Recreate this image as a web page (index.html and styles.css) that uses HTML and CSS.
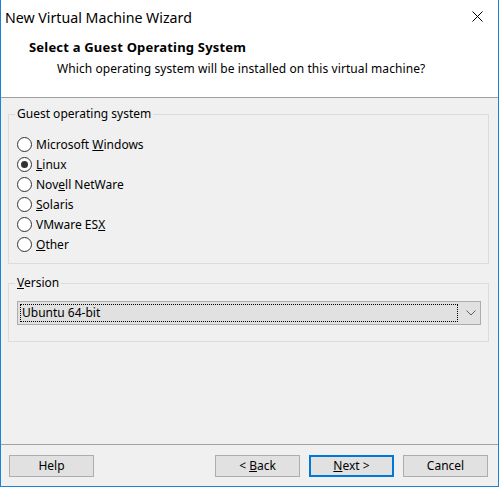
FILE: index.html
```html
<!DOCTYPE html>
<html>
<head>
<meta charset="utf-8">
<link rel="stylesheet" href="styles.css">
</head>
<body>
<div class="window">
  <div class="top">
    <div class="titlebar">
      <span class="title">New Virtual Machine Wizard</span>
      <svg class="close" width="11" height="11" viewBox="0 0 11 11"><path d="M0.5 0.5 L10.5 10.5 M10.5 0.5 L0.5 10.5" stroke="#000" stroke-width="1" fill="none"/></svg>
    </div>
    <div class="heading">Select a Guest Operating System</div>
    <div class="subheading">Which operating system will be installed on this virtual machine?</div>
  </div>
  <div class="content">
    <fieldset class="group group-os">
      <legend>Guest operating system</legend>
      <div class="radio"><span class="dot"></span><span>Microsoft <u>W</u>indows</span></div>
      <div class="radio"><span class="dot checked"></span><span><u>L</u>inux</span></div>
      <div class="radio"><span class="dot"></span><span>Nov<u>e</u>ll NetWare</span></div>
      <div class="radio"><span class="dot"></span><span><u>S</u>olaris</span></div>
      <div class="radio"><span class="dot"></span><span>VMware ES<u>X</u></span></div>
      <div class="radio"><span class="dot"></span><span><u>O</u>ther</span></div>
    </fieldset>
    <fieldset class="group group-ver">
      <legend><u>V</u>ersion</legend>
      <div class="combo">
        <div class="combo-focus">Ubuntu 64-bit</div>
        <svg class="chev" width="10" height="6" viewBox="0 0 10 6"><path d="M0.5 0.5 L5 5 L9.5 0.5" stroke="#606060" stroke-width="1" fill="none"/></svg>
      </div>
    </fieldset>
  </div>
  <div class="footer">
    <button class="btn">Help</button>
    <div class="spacer"></div>
    <button class="btn">&lt; <u>B</u>ack</button>
    <button class="btn default"><u>N</u>ext &gt;</button>
    <button class="btn">Cancel</button>
  </div>
</div>
</body>
</html>
```

FILE: styles.css
```css
html, body {
  margin: 0;
  padding: 0;
  background: #f0f0f0;
}
body {
  font-family: "Noto Sans", "DejaVu Sans", sans-serif;
  font-size: 12px;
  color: #000;
}
.window {
  width: 499px;
  height: 487px;
  box-sizing: border-box;
  border-left: 1px solid #1883d7;
  border-right: 1px solid #1883d7;
  border-bottom: 1px solid #1883d7;
  background: #f0f0f0;
  display: flex;
  flex-direction: column;
}
.top {
  background: #fff;
  height: 98px;
  box-sizing: border-box;
  border-bottom: 1px solid #a0a0a0;
}
.titlebar {
  height: 34px;
  display: flex;
  align-items: center;
  justify-content: space-between;
  padding-left: 4px;
  padding-right: 15px;
}
.title {
  font-size: 14.2px;
}
.close {
  display: block;
  margin-top: -2px;
}
.heading {
  font-weight: bold;
  font-size: 13px;
  letter-spacing: 0.2px;
  line-height: 20px;
  margin-top: 3px;
  padding-left: 28px;
}
.subheading {
  line-height: 20px;
  margin-top: 2px;
  padding-left: 56px;
  letter-spacing: 0.08px;
}
.content {
  flex: 1;
  padding: 8px 9px 0 7px;
}
.group {
  margin: 0;
  border: 1px solid #dcdcdc;
  padding: 0;
}
.group legend {
  padding: 0 2px;
  margin-left: -2px;
  line-height: 16px;
}
.group-os {
  padding: 12px 8px 9px 8px;
}
.group-ver {
  margin-top: 11px;
  padding: 10px 7px 16px 8px;
}
.radio {
  display: flex;
  align-items: center;
  height: 20px;
}
.dot {
  width: 13px;
  height: 13px;
  border: 1px solid #333;
  border-radius: 50%;
  background: #fff;
  margin-right: 4px;
  position: relative;
  flex: none;
}
.dot.checked::after {
  content: "";
  position: absolute;
  left: 3px;
  top: 3px;
  width: 7px;
  height: 7px;
  border-radius: 50%;
  background: #333;
}
.combo {
  height: 24px;
  box-sizing: border-box;
  border: 1px solid #adadad;
  background: #e1e1e1;
  display: flex;
  align-items: center;
  padding: 2px;
}
.combo-focus {
  width: 438px;
  height: 18px;
  box-sizing: border-box;
  border: 1px dotted #000;
  line-height: 16px;
  padding-left: 1px;
}
.chev {
  margin-left: 8px;
  display: block;
}
.footer {
  height: 42px;
  box-sizing: border-box;
  border-top: 1px solid #a0a0a0;
  display: flex;
  align-items: center;
  padding: 0 10px 0 8px;
  gap: 9px;
}
.spacer {
  flex: 1;
}
.btn {
  width: 85px;
  height: 22px;
  box-sizing: border-box;
  border: 1px solid #adadad;
  background: #e1e1e1;
  font-family: inherit;
  font-size: 12px;
  color: #000;
  padding: 0;
  margin: 0;
}
.btn.default {
  border: 2px solid #0078d7;
}
```
